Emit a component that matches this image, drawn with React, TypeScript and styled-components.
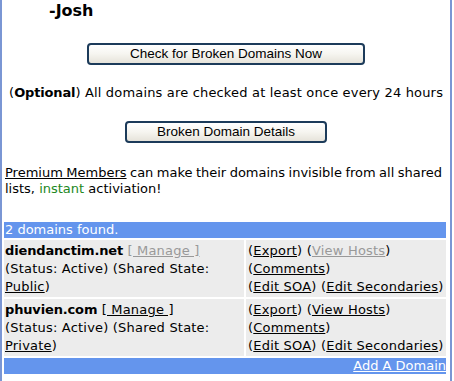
import styled, { createGlobalStyle } from "styled-components";

const GlobalStyle = createGlobalStyle`
  html, body {
    margin: 0;
    padding: 0;
    background: #ffffff;
  }
  body {
    font-family: "DejaVu Sans", Verdana, sans-serif;
    font-size: 13px;
    letter-spacing: 0.2px;
    color: #000000;
  }
  b {
    letter-spacing: -0.15px;
  }
`;

const Frame = styled.div`
  box-sizing: border-box;
  width: 452px;
  min-height: 381px;
  border-left: 2px solid #7a96d4;
  border-right: 2px solid #7a96d4;
  overflow: hidden;
`;

const Signature = styled.div`
  padding: 2px 0 0 47px;
  font-size: 16px;
  font-weight: bold;
  line-height: 18px;
  letter-spacing: 0;
`;

const ButtonRow = styled.div<{ $top: number }>`
  display: flex;
  justify-content: center;
  margin-top: ${({ $top }) => $top}px;
`;

const Button = styled.button<{ $width: number }>`
  box-sizing: border-box;
  width: ${({ $width }) => $width}px;
  height: 22px;
  padding: 0;
  border: 2px solid #1c3b5a;
  border-radius: 4px;
  background: linear-gradient(#ffffff 0%, #f6f5f0 50%, #e6e3da 100%);
  font-family: "Liberation Sans", Arial, sans-serif;
  font-size: 13.5px;
  letter-spacing: 0;
  line-height: 18px;
  color: #000000;
  cursor: pointer;
`;

const Note = styled.p`
  margin: 20px 0 0;
  text-align: center;
  line-height: 16px;
  white-space: nowrap;
  letter-spacing: 0.17px;
`;

const Promo = styled.div`
  width: 437px;
  margin: 22px 0 0 3px;
  line-height: 16px;
  letter-spacing: 0;
`;

const PromoLine = styled.div<{ $full?: boolean }>`
  text-align: ${({ $full }) => ($full ? "justify" : "left")};
  text-align-last: ${({ $full }) => ($full ? "justify" : "left")};
  word-spacing: ${({ $full }) => ($full ? "-1px" : "normal")};
  white-space: nowrap;
`;

const Link = styled.a<{ $muted?: boolean }>`
  color: ${({ $muted }) => ($muted ? "#999999" : "#000000")};
  text-decoration: underline;
  cursor: pointer;
`;

const Green = styled.span`
  color: #228822;
`;

const DomainTable = styled.table`
  width: 446px;
  margin-top: 23px;
  border-spacing: 2px;
  border-collapse: separate;
`;

const BarCell = styled.td<{ $align?: string }>`
  height: 16px;
  padding: 0 0 0 1px;
  background: #6495ed;
  color: #ffffff;
  line-height: 16px;
  letter-spacing: 0;
  text-align: ${({ $align }) => $align || "left"};
  a {
    color: #ffffff;
  }
`;

const Cell = styled.td<{ $width: number }>`
  width: ${({ $width }) => $width}px;
  padding: 2px 0 1px ${({ $width }) => ($width > 220 ? 1 : 2)}px;
  background: #ececec;
  line-height: 18px;
  vertical-align: top;
  white-space: nowrap;
`;

interface Domain {
  name: string;
  state: string;
  muted: boolean;
}

const domains: Domain[] = [
  { name: "diendanctim.net", state: "Public", muted: true },
  { name: "phuvien.com", state: "Private", muted: false },
];

export default function App() {
  return (
    <>
      <GlobalStyle />
      <Frame>
        <Signature>-Josh</Signature>
        <ButtonRow $top={23}>
          <Button $width={278}>Check for Broken Domains Now</Button>
        </ButtonRow>
        <Note>
          (<b>Optional</b>) All domains are checked at least once every 24 hours
        </Note>
        <ButtonRow $top={20}>
          <Button $width={202}>Broken Domain Details</Button>
        </ButtonRow>
        <Promo>
          <PromoLine $full>
            <Link>Premium Members</Link> can make their domains invisible from all shared
          </PromoLine>
          <PromoLine>
            lists, <Green>instant</Green> activiation!
          </PromoLine>
        </Promo>
        <DomainTable>
          <tbody>
            <tr>
              <BarCell colSpan={2}>2 domains found.</BarCell>
            </tr>
            {domains.map((d) => (
              <tr key={d.name}>
                <Cell $width={239}>
                  <b>{d.name}</b> <Link $muted={d.muted}>[ Manage ]</Link>
                  <br />
                  (Status: Active) (Shared State:
                  <br />
                  <Link>{d.state}</Link>)
                </Cell>
                <Cell $width={198}>
                  (<Link>Export</Link>) (<Link $muted={d.muted}>View Hosts</Link>)
                  <br />
                  (<Link>Comments</Link>)
                  <br />
                  (<Link>Edit SOA</Link>) (<Link>Edit Secondaries</Link>)
                </Cell>
              </tr>
            ))}
            <tr>
              <BarCell colSpan={2} $align="right">
                <Link>Add A Domain</Link>
              </BarCell>
            </tr>
          </tbody>
        </DomainTable>
      </Frame>
    </>
  );
}
